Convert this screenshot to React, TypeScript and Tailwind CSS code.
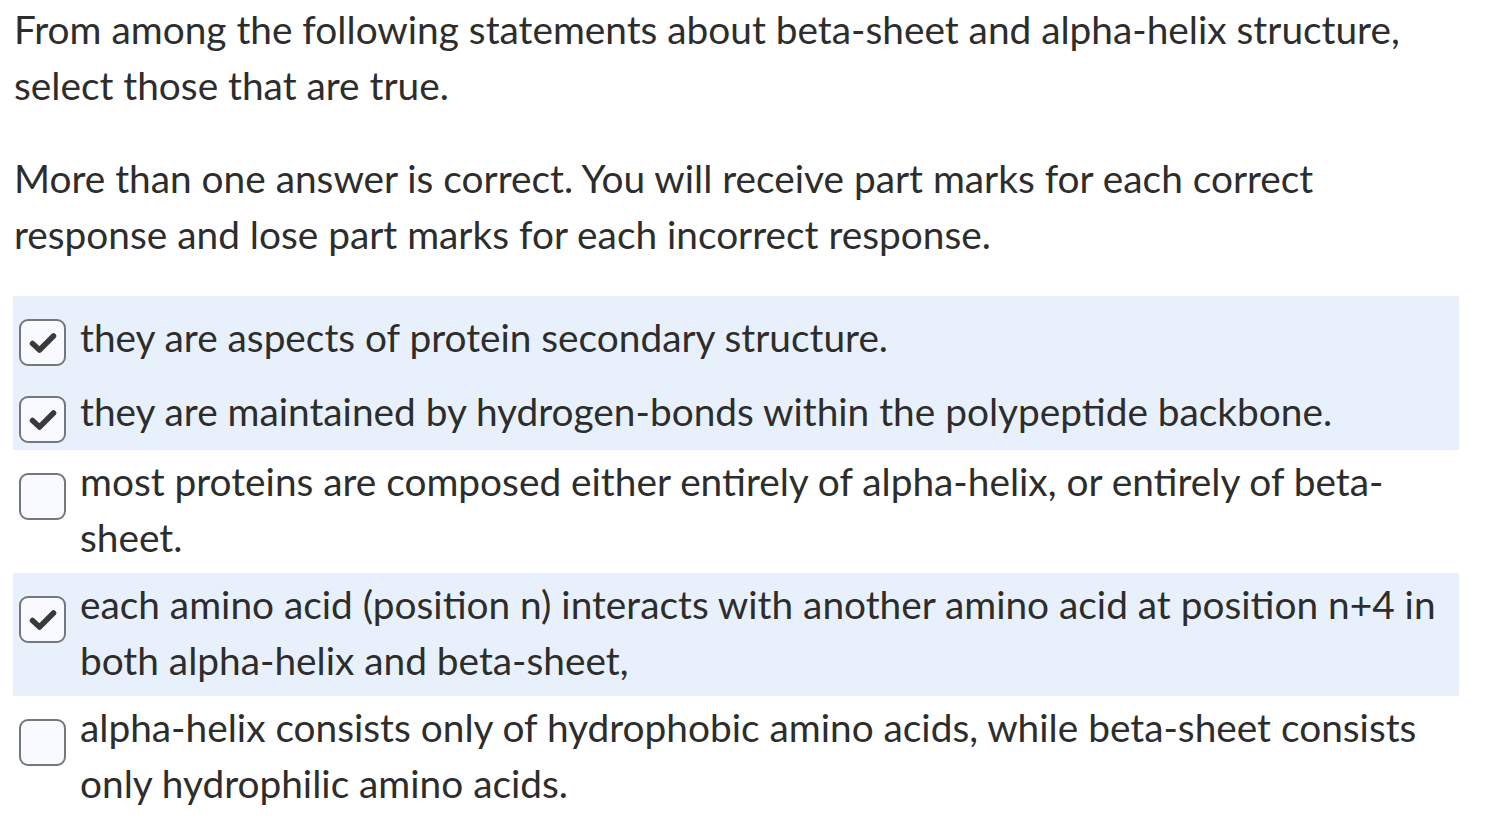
import React from 'react';

const options = [
  { text: 'they are aspects of protein secondary structure.', checked: true, top: 'pt-[13px]' },
  { text: 'they are maintained by hydrogen-bonds within the polypeptide backbone.', checked: true, top: 'pt-[10px]' },
  { text: 'most proteins are composed either entirely of alpha-helix, or entirely of beta-sheet.', checked: false, top: 'pt-[3px]' },
  { text: 'each amino acid (position n) interacts with another amino acid at position n+4 in both alpha-helix and beta-sheet,', checked: true, top: 'pt-[3px]' },
  { text: 'alpha-helix consists only of hydrophobic amino acids, while beta-sheet consists only hydrophilic amino acids.', checked: false, top: 'pt-[3px]' },
];

const Check = () => (
  <svg viewBox="0 0 30 24" className="h-[24px] w-[30px]" fill="none" stroke="#3a3a3a" strokeWidth={5.5} strokeLinecap="round" strokeLinejoin="round">
    <path d="M4.5 12.5l7 6.5L25.5 5" />
  </svg>
);

const Box = ({ checked }: { checked: boolean }) => (
  <div className="mt-[23px] mb-[7px] flex h-[47px] w-[47px] shrink-0 items-center justify-center rounded-[9px] border-2 border-[#74787d] bg-[#f8faff]">
    {checked && <Check />}
  </div>
);

export default function App() {
  return (
    <div className="min-h-screen bg-white pl-[13px] pr-[35px] pt-[1px] font-['Lato','Liberation_Sans',sans-serif] text-[38.8px] leading-[56px] text-[#2d2d2d]">
      <p className="pl-px">
        From among the following statements about beta-sheet and alpha-helix structure, select those that are true.
      </p>
      <p className="mt-[37px] pl-px">
        More than one answer is correct. You will receive part marks for each correct response and lose part marks for each incorrect response.
      </p>
      <div className="mt-[34px] flex flex-col">
        {options.map((o, i) => (
          <label key={i} className={`flex gap-[14px] pl-[6px] pr-[4px] ${o.checked ? 'bg-[#e8f1fb]' : ''}`}>
            <Box checked={o.checked} />
            <span className={`${o.top} pb-[8px]`}>{o.text}</span>
          </label>
        ))}
      </div>
    </div>
  );
}
